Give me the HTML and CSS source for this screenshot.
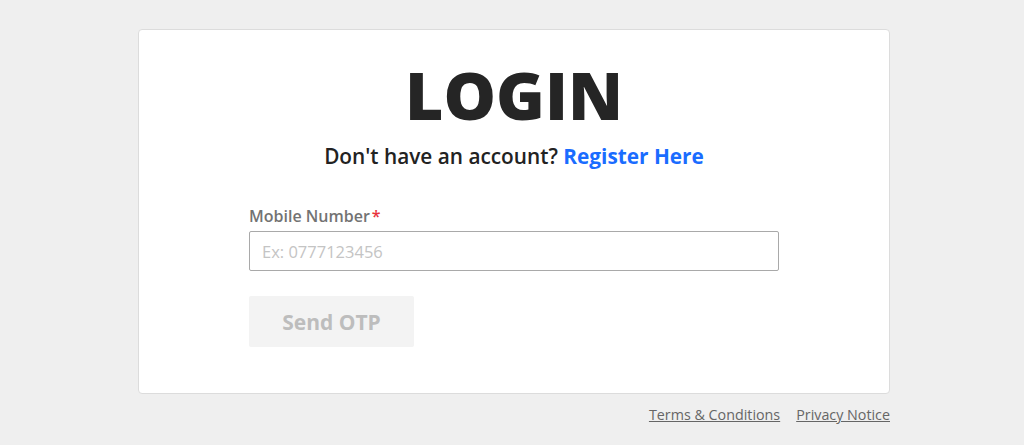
FILE: index.html
```html
<!DOCTYPE html>
<html lang="en">
<head>
    <meta charset="UTF-8">
    <meta name="viewport" content="width=device-width, initial-scale=1.0">
    <title>Login</title>
    <link rel="stylesheet" href="styles.css">
</head>
<body>
    <div class="page">
        <div class="card">
            <h1>LOGIN</h1>
            <p class="subtitle">Don't have an account? <a href="#" class="register">Register Here</a></p>

            <form class="form" onsubmit="return false">
                <label for="mobile" class="label">Mobile Number<span class="req">*</span></label>
                <input type="text" id="mobile" class="input" placeholder="Ex: 0777123456">
                <button type="submit" class="btn" disabled>Send OTP</button>
            </form>
        </div>

        <div class="links">
            <a href="#">Terms &amp; Conditions</a>
            <a href="#">Privacy Notice</a>
        </div>
    </div>
</body>
</html>
```

FILE: styles.css
```css
body {
    margin: 0;
    background-color: #efefef;
    font-family: "Open Sans", Arial, sans-serif;
    color: #222;
}
.page {
    width: 752px;
    margin: 29px auto 0;
    padding-left: 4px;
}
.card {
    background-color: #fff;
    border: 1px solid #dcdcdc;
    border-radius: 4px;
    padding: 26px 110px 46px;
    text-align: center;
}
h1 {
    margin: 0;
    font-size: 66px;
    font-weight: 800;
    line-height: 76px;
    color: #252525;
}
.subtitle {
    margin: 10px 0 0;
    font-size: 20.8px;
    font-weight: 600;
    line-height: 28px;
    color: #222;
}
.register {
    color: #1a6cff;
    font-weight: 700;
    text-decoration: none;
}
.form {
    display: flex;
    flex-direction: column;
    align-items: flex-start;
    margin-top: 35px;
    text-align: left;
}
.label {
    font-size: 16px;
    font-weight: 600;
    line-height: 22px;
    color: #737373;
}
.req {
    color: #e8333c;
    margin-left: 2px;
}
.input {
    box-sizing: border-box;
    width: 100%;
    height: 40px;
    margin-top: 4px;
    padding: 0 12px;
    border: 1px solid #a9a9a9;
    border-radius: 2px;
    font-family: inherit;
    font-size: 16.5px;
    color: #333;
}
.input::placeholder {
    color: #c4c4c4;
}
.btn {
    width: 165px;
    height: 51px;
    margin-top: 25px;
    border: none;
    border-radius: 2px;
    background-color: #f3f3f3;
    color: #bdbdbd;
    font-family: inherit;
    font-size: 21px;
    font-weight: 700;
}
.links {
    display: flex;
    justify-content: flex-end;
    gap: 16px;
    margin-top: 11px;
}
.links a {
    font-size: 14.3px;
    line-height: 20px;
    color: #666;
}
```
